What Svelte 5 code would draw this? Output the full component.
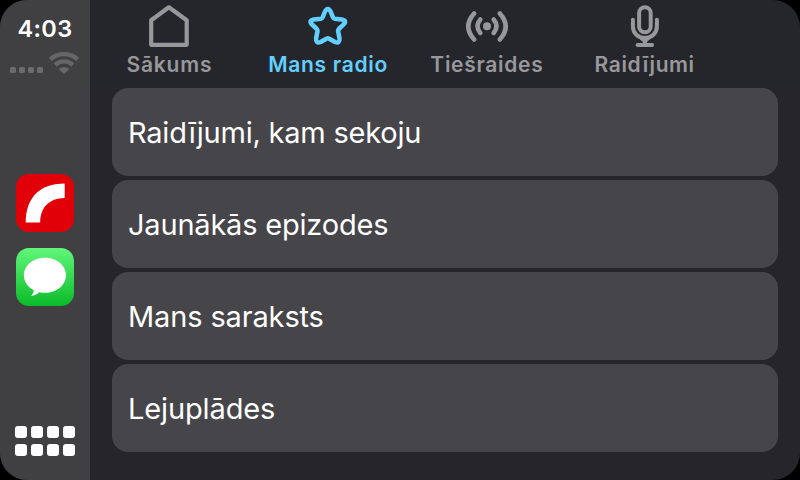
<script>
  const tabs = [
    { id: 'home', label: 'Sākums', spacing: 0.8 },
    { id: 'star', label: 'Mans radio', spacing: 0.72, active: true },
    { id: 'live', label: 'Tiešraides', spacing: 0.7 },
    { id: 'mic', label: 'Raidījumi', spacing: 0.57 }
  ];
  const rows = [
    { label: 'Raidījumi, kam sekoju', spacing: -0.22 },
    { label: 'Jaunākās epizodes', spacing: -0.2 },
    { label: 'Mans saraksts', spacing: -0.14 },
    { label: 'Lejuplādes', spacing: -0.13 }
  ];
</script>

<div class="screen">
  <aside>
    <time>4:03</time>
    <div class="status">
      <div class="dots">{#each Array(4) as _}<i></i>{/each}</div>
      <svg width="30" height="22" viewBox="0 0 30 22" fill="none" stroke="#666668" stroke-width="4.200">
        <path d="M1.300 7.400C9 .3 21 .3 28.700 7.400" />
        <path d="M6.200 12.900C11.200 8.100 18.800 8.100 23.800 12.900" />
        <path d="M9.700 17.200C12.600 14.200 17.400 14.200 20.300 17.200L15 22Z" fill="#666668" stroke="none" />
      </svg>
    </div>
    <svg class="app radio" width="58" height="58" viewBox="0 0 58 58">
      <rect width="58" height="58" rx="13" fill="#e10007" />
      <path d="M9.700 48.500C10 24 23 9.500 48.700 9.500V24C33 24.500 24.500 33 24.200 48.500Z" fill="#fff" />
    </svg>
    <svg class="app" width="58" height="58" viewBox="0 0 58 58">
      <defs>
        <linearGradient id="green" x1="0" y1="0" x2="0" y2="1">
          <stop offset="0" stop-color="#61f779" />
          <stop offset="1" stop-color="#0abb29" />
        </linearGradient>
      </defs>
      <rect width="58" height="58" rx="13" fill="url(#green)" />
      <path d="M29 9.800C17.200 9.800 7.900 17.500 7.900 27.300C7.900 33.600 11.700 39.100 17.800 42.200C17.700 44.500 16.500 46.300 15 47.900C18.500 47.600 21 46.200 23.100 44.200C25 44.600 27 44.800 29 44.800C40.800 44.800 50 37 50 27.300C50 17.500 40.800 9.800 29 9.800Z" fill="#fff" />
    </svg>
    <div class="grid">{#each Array(8) as _}<i></i>{/each}</div>
  </aside>
  <main>
    <nav>
      {#each tabs as tab}
        <div class="tab" class:active={tab.active}>
          <svg width="48" height="48" viewBox="0 0 48 48" fill="none" stroke="currentColor" stroke-width="4.200" stroke-linecap="round" stroke-linejoin="round">
            {#if tab.id === 'home'}
              <path d="M6.200 44.800V20.300L23.900 7.300L41.700 20.300V44.800Z" />
            {:else if tab.id === 'star'}
              <path stroke-width="4.500" d="M21.200 11.200Q23.800 6.600 26.400 11.200L29 17.300Q29.500 18.500 30.800 18.700L37.600 19.500Q43.500 20.500 39.500 24.500L34.800 29Q33.900 30 34.100 31.300L35.500 38.300Q36 44.100 31 42L25.200 38.700Q23.800 38 22.400 38.700L16.600 42Q11.600 44.100 12.100 38.300L13.500 31.300Q13.700 30 12.800 29L8.100 24.500Q4.100 20.500 10 19.500L16.800 18.700Q18.100 18.500 18.600 17.300Z" />
            {:else if tab.id === 'live'}
              <circle cx="24" cy="26.200" r="4" fill="currentColor" stroke="none" />
              <path d="M17.300 19.500Q11.700 26.200 17.300 32.900M30.700 19.500Q36.300 26.200 30.700 32.900" stroke-width="4.600" />
              <path d="M11.100 13.500Q-.5 26.500 11.100 39.500M36.900 13.500Q48.500 26.500 36.900 39.500" stroke-width="4.600" />
            {:else}
              <rect x="17.100" y="7.200" width="11.600" height="25" rx="5.800" stroke-width="4" />
              <path d="M10.900 19.700V26.500C10.900 33.300 16.100 38 22.900 38S34.900 33.300 34.900 26.500V19.700M22.900 38V44M15.600 45H30.100" stroke-width="4" />
              <path d="M17.500 39H28.300L24.900 42H20.900Z" fill="currentColor" stroke="none" />
            {/if}
          </svg>
          <span class={tab.id} style:letter-spacing="{tab.spacing}px">{tab.label}</span>
        </div>
      {/each}
    </nav>
    <section>
      {#each rows as row}
        <div class="row"><span style:letter-spacing="{row.spacing}px">{row.label}</span></div>
      {/each}
    </section>
  </main>
</div>

<style>
  :global(body) { background: #000; }
  .screen {
    display: flex; width: 800px; height: 480px; overflow: hidden;
    border-radius: 27px; background: linear-gradient(#25262b 88px, #25252a 88px);
    font-family: Inter, "Liberation Sans", sans-serif;
  }
  aside {
    box-sizing: border-box; width: 90px; height: 480px; padding-top: 14px;
    display: flex; flex-direction: column; align-items: center; background: #404042;
  }
  time { font-size: 23.5px; line-height: 30px; font-weight: 600; color: #fff; letter-spacing: 0.3px; }
  .status { display: flex; align-items: flex-end; gap: 6px; height: 30px; width: 70px; }
  .dots { display: flex; gap: 3px; padding-bottom: 1px; }
  .dots i { width: 6px; height: 6px; border-radius: 1.5px; background: #6b6b6d; }
  svg { display: block; flex: none; }
  .radio { margin: 100px 0 16px; }
  .grid { margin-top: 120px; display: grid; grid-template-columns: repeat(4, 12px); gap: 6px 4px; }
  .grid i { height: 12px; border-radius: 3px; background: #fff; }
  main { flex: 1; }
  nav { display: flex; height: 88px; width: 635px; }
  .tab { flex: 1 1 0; display: flex; flex-direction: column; align-items: center; color: #98989b; }
  .tab.active { color: #62d0ff; }
  .tab span { font-size: 21px; line-height: 34px; font-weight: 600; white-space: nowrap; }
  .tab .mic { margin-right: 2px; }
  section { display: flex; flex-direction: column; gap: 4px; margin: 0 22px; }
  .row {
    height: 88px; box-sizing: border-box; padding: 1px 0 0 16px; display: flex; align-items: center;
    border-radius: 16px; background: #464549; color: #fff; font-size: 29px; white-space: nowrap;
  }
</style>
